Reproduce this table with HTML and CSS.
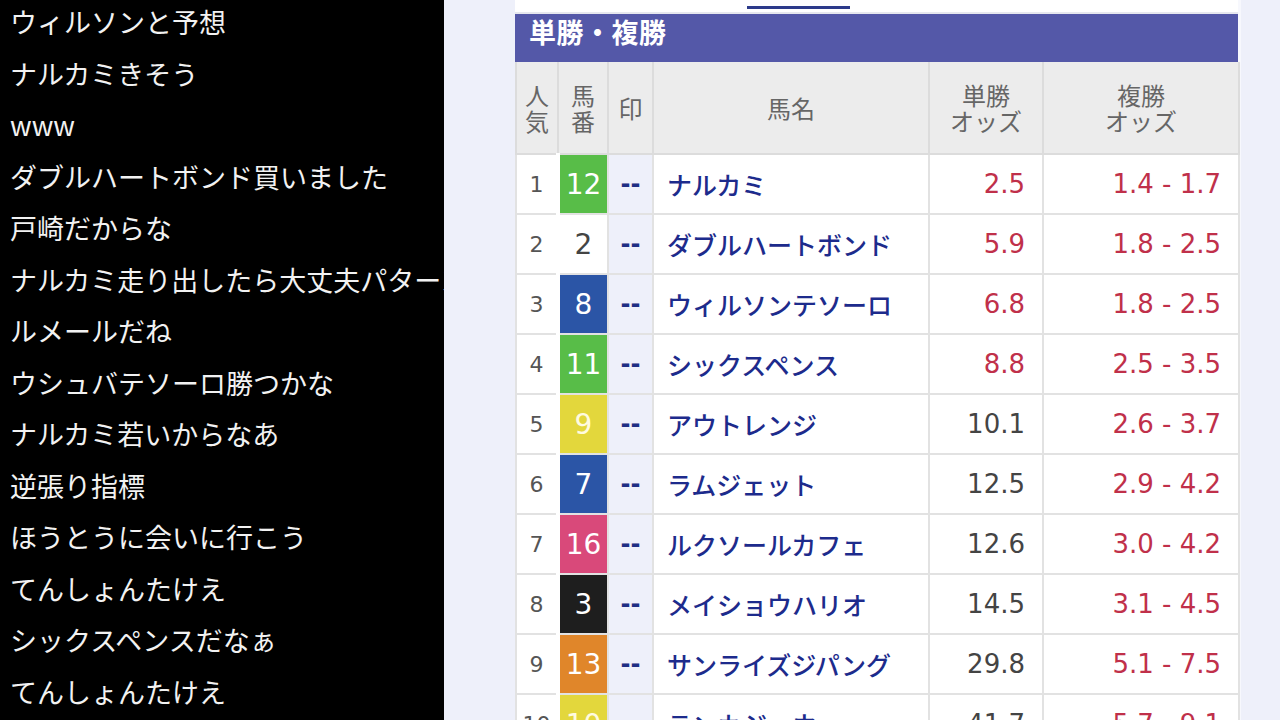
FILE: index.html
```html
<!DOCTYPE html>
<html lang="ja">
<head>
<meta charset="utf-8">
<link rel="stylesheet" href="styles.css">
</head>
<body>
<div class="screen">
  <aside class="comments">
    <div class="comment">ウィルソンと予想</div>
    <div class="comment">ナルカミきそう</div>
    <div class="comment">www</div>
    <div class="comment">ダブルハートボンド買いました</div>
    <div class="comment">戸崎だからな</div>
    <div class="comment">ナルカミ走り出したら大丈夫パターン</div>
    <div class="comment">ルメールだね</div>
    <div class="comment">ウシュバテソーロ勝つかな</div>
    <div class="comment">ナルカミ若いからなあ</div>
    <div class="comment">逆張り指標</div>
    <div class="comment">ほうとうに会いに行こう</div>
    <div class="comment">てんしょんたけえ</div>
    <div class="comment">シックスペンスだなぁ</div>
    <div class="comment">てんしょんたけえ</div>
  </aside>
  <main class="page">
    <div class="content">
      <div class="tabs"><span class="tab-active"></span></div>
      <h2 class="section-title">単勝・複勝</h2>
      <table class="odds">
        <colgroup>
          <col class="c-pop"><col class="c-num"><col class="c-mark"><col class="c-name"><col class="c-win"><col class="c-place">
        </colgroup>
        <thead>
          <tr>
            <th>人<br>気</th>
            <th>馬<br>番</th>
            <th>印</th>
            <th>馬名</th>
            <th>単勝<br>オッズ</th>
            <th>複勝<br>オッズ</th>
          </tr>
        </thead>
        <tbody>
          <tr><td class="pop">1</td><td class="num w-green">12</td><td class="mark">--</td><td class="name">ナルカミ</td><td class="win low">2.5</td><td class="place">1.4 - 1.7</td></tr>
          <tr><td class="pop">2</td><td class="num w-white">2</td><td class="mark">--</td><td class="name">ダブルハートボンド</td><td class="win low">5.9</td><td class="place">1.8 - 2.5</td></tr>
          <tr><td class="pop">3</td><td class="num w-blue">8</td><td class="mark">--</td><td class="name">ウィルソンテソーロ</td><td class="win low">6.8</td><td class="place">1.8 - 2.5</td></tr>
          <tr><td class="pop">4</td><td class="num w-green">11</td><td class="mark">--</td><td class="name">シックスペンス</td><td class="win low">8.8</td><td class="place">2.5 - 3.5</td></tr>
          <tr><td class="pop">5</td><td class="num w-yellow">9</td><td class="mark">--</td><td class="name">アウトレンジ</td><td class="win">10.1</td><td class="place">2.6 - 3.7</td></tr>
          <tr><td class="pop">6</td><td class="num w-blue">7</td><td class="mark">--</td><td class="name">ラムジェット</td><td class="win">12.5</td><td class="place">2.9 - 4.2</td></tr>
          <tr><td class="pop">7</td><td class="num w-pink">16</td><td class="mark">--</td><td class="name">ルクソールカフェ</td><td class="win">12.6</td><td class="place">3.0 - 4.2</td></tr>
          <tr><td class="pop">8</td><td class="num w-black">3</td><td class="mark">--</td><td class="name">メイショウハリオ</td><td class="win">14.5</td><td class="place">3.1 - 4.5</td></tr>
          <tr><td class="pop">9</td><td class="num w-orange">13</td><td class="mark">--</td><td class="name">サンライズジパング</td><td class="win">29.8</td><td class="place">5.1 - 7.5</td></tr>
          <tr><td class="pop">10</td><td class="num w-yellow">10</td><td class="mark">--</td><td class="name">テンカジーウ</td><td class="win">41.7</td><td class="place">5.7 - 9.1</td></tr>
        </tbody>
      </table>
    </div>
  </main>
</div>
</body>
</html>
```
FILE: styles.css
```css
html, body {
  margin: 0;
  padding: 0;
  height: 100%;
  overflow: hidden;
}
body {
  font-family: "Noto Sans CJK JP", "Noto Sans", sans-serif;
  background: #000;
}
.screen {
  display: flex;
  width: 1280px;
  height: 720px;
  overflow: hidden;
}
.comments {
  width: 444px;
  flex: none;
  background: #000;
  color: #f2f2f2;
  overflow: hidden;
  padding: 0 0 0 10px;
  box-sizing: border-box;
  margin-top: -4px;
}
.comment {
  font-size: 27px;
  line-height: 51.5px;
  height: 51.5px;
  white-space: nowrap;
}
.page {
  flex: 1;
  background: #eef0fa;
  padding-left: 71px;
  overflow: hidden;
}
.content {
  width: 723px;
  border-right: 3px solid #f7f8fd;
}
.tabs {
  height: 12px;
  background: #fff;
  border-bottom: 2px solid #e6e7ee;
  position: relative;
}
.tab-active {
  position: absolute;
  left: 232px;
  top: 6px;
  width: 103px;
  height: 3px;
  background: #2c3a8a;
}
.section-title {
  margin: 0;
  height: 48px;
  background: #5458a8;
  color: #fff;
  font-size: 27px;
  font-weight: bold;
  line-height: 36px;
  padding-left: 14px;
  box-sizing: border-box;
  letter-spacing: 0.5px;
}
.odds {
  width: 723px;
  table-layout: fixed;
  border-collapse: collapse;
  background: #fff;
}
.c-pop { width: 42px; }
.c-num { width: 50px; }
.c-mark { width: 45px; }
.c-name { width: 276px; }
.c-win { width: 114px; }
.c-place { width: 196px; }
.odds th {
  background: #ececec;
  color: #666;
  font-weight: normal;
  font-size: 24px;
  line-height: 26px;
  height: 91px;
  padding: 0;
  border: 2px solid #dcdcdc;
  border-top: none;
  vertical-align: middle;
  text-align: center;
}
.odds td {
  height: 58px;
  padding: 0;
  border: 2px solid #e2e2e2;
  vertical-align: middle;
  white-space: nowrap;
  overflow: hidden;
}
.pop {
  text-align: center;
  color: #555;
  font-family: "DejaVu Sans", sans-serif;
  font-size: 22px;
}
.num {
  text-align: center;
  color: #fff;
  font-family: "DejaVu Sans", sans-serif;
  font-size: 28px;
  border-left: 4px solid #fff !important;
}
.w-white { color: #444; background: #fff; }
.w-green { background: #58bd48; }
.w-blue { background: #2b55a6; }
.w-yellow { background: #e3d73c; color: #fffbe0; }
.w-pink { background: #d9497a; }
.w-black { background: #1e1e1e; }
.w-orange { background: #e0862a; }
.mark {
  background: #eef0fa;
  color: #1f2e84;
  text-align: center;
  font-family: "DejaVu Sans", sans-serif;
  font-size: 24px;
  font-weight: bold;
}
.name {
  color: #1d2b8c;
  font-size: 25px;
  font-weight: 500;
  padding-left: 13px !important;
}
.win, .place {
  text-align: right;
  font-family: "DejaVu Sans", sans-serif;
  font-size: 26px;
  padding-right: 17px !important;
  color: #444;
}
.win.low, .place {
  color: #c0304a;
}
```
